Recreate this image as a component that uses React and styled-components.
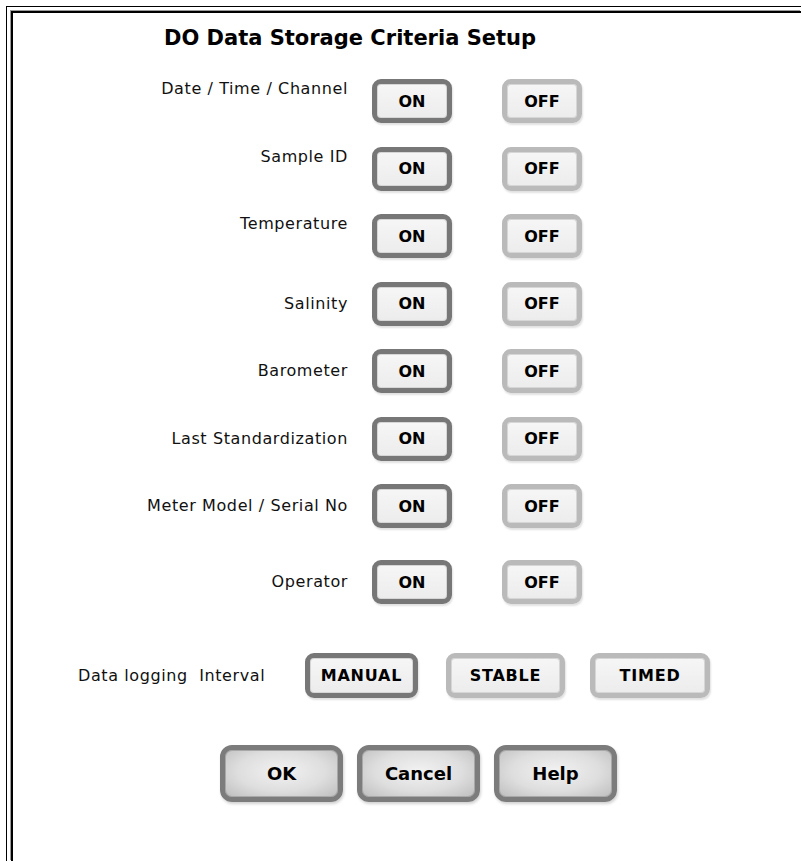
import React from 'react';
import styled, { createGlobalStyle } from 'styled-components';

const GlobalStyle = createGlobalStyle`
  html, body {
    margin: 0;
    padding: 0;
    background: #fff;
    overflow: hidden;
  }
  body {
    font-family: 'DejaVu Sans', Verdana, sans-serif;
    color: #111;
  }
`;

const Frame = styled.div`
  margin: 6px 0 0 6px;
  padding: 4px 0 0 4px;
  height: calc(100vh - 6px);
  box-sizing: border-box;
  border-left: 1px solid #000;
  border-top: 1px solid #000;
`;

const Panel = styled.div`
  height: 100%;
  box-sizing: border-box;
  border-left: 2px solid #000;
  border-top: 2px solid #000;
  box-shadow: -1px -1px 0 #9a9a9a;
`;

const Content = styled.div`
  width: 674px;
  padding-top: 12px;
  display: flex;
  flex-direction: column;
`;

const Title = styled.h1`
  margin: 0;
  font-size: 21px;
  line-height: 26px;
  font-weight: bold;
  text-align: center;
  color: #000;
`;

const Rows = styled.div`
  margin-top: 28px;
  display: flex;
  flex-direction: column;
`;

const Row = styled.div`
  display: flex;
  align-items: center;
  height: 44px;
  margin-top: ${p => p.$first ? 0 : 23.5 + (p.$extra || 0)}px;
`;

const Label = styled.div`
  width: 335px;
  flex-shrink: 0;
  text-align: right;
  font-size: 16px;
  letter-spacing: 0.6px;
  line-height: 20px;
  white-space: nowrap;
  margin-bottom: ${p => p.$raise || 0}px;
`;

const Toggle = styled.button`
  flex-shrink: 0;
  width: ${p => p.$w || 80}px;
  height: ${p => p.$h || 44}px;
  margin-left: ${p => p.$gap}px;
  box-sizing: border-box;
  border: 5px solid ${p => p.$on ? '#777' : '#bababa'};
  border-radius: 9px;
  background: linear-gradient(#f6f6f6, #ececec);
  box-shadow: inset 0 0 0 1px #d6d6d6, 1px 2px 2px rgba(0, 0, 0, 0.12);
  font-family: 'DejaVu Sans', Verdana, sans-serif;
  font-weight: bold;
  font-size: ${p => p.$fs || 16}px;
  letter-spacing: ${p => p.$ls || 0}px;
  color: #000;
  padding: 0;
  cursor: pointer;
`;

const LogRow = styled.div`
  margin-top: 49px;
  padding-left: 65px;
  display: flex;
  align-items: center;
  height: 45px;
`;

const LogLabel = styled.div`
  width: 227px;
  flex-shrink: 0;
  font-size: 16px;
  letter-spacing: 0.6px;
  white-space: pre;
`;

const Actions = styled.div`
  margin-top: 47px;
  padding-left: 207px;
  display: flex;
  gap: 14px;
`;

const ActionButton = styled.button`
  flex-shrink: 0;
  width: 123px;
  height: 57px;
  box-sizing: border-box;
  border: 5px solid #7c7c7c;
  border-radius: 12px;
  background: radial-gradient(ellipse at 50% 45%, #f2f2f2 0%, #dedede 55%, #bdbdbd 100%);
  box-shadow: inset 0 0 0 1px #a8a8a8, 1px 2px 3px rgba(0, 0, 0, 0.18);
  font-family: 'DejaVu Sans', Verdana, sans-serif;
  font-weight: bold;
  font-size: 18px;
  color: #000;
  padding: 0;
  cursor: pointer;
`;

const fields = [
  { label: 'Date / Time / Channel', raise: 24 },
  { label: 'Sample ID', raise: 24 },
  { label: 'Temperature', raise: 24 },
  { label: 'Salinity', raise: 0 },
  { label: 'Barometer', raise: 0 },
  { label: 'Last Standardization', raise: 0 },
  { label: 'Meter Model / Serial No', raise: 0 },
  { label: 'Operator', raise: 0, extra: 8.5 },
];

export default function App() {
  return (
    <>
      <GlobalStyle />
      <Frame>
        <Panel>
          <Content>
            <Title>DO Data Storage Criteria Setup</Title>
            <Rows>
              {fields.map((f, i) => (
                <Row key={f.label} $first={i === 0} $extra={f.extra}>
                  <Label $raise={f.raise}>{f.label}</Label>
                  <Toggle $on $gap={24}>ON</Toggle>
                  <Toggle $gap={50}>OFF</Toggle>
                </Row>
              ))}
            </Rows>
            <LogRow>
              <LogLabel>{'Data logging  Interval'}</LogLabel>
              <Toggle $on $gap={0} $w={113} $h={45} $ls={0.8}>MANUAL</Toggle>
              <Toggle $gap={28} $w={119} $h={45} $ls={0.8}>STABLE</Toggle>
              <Toggle $gap={25} $w={120} $h={45} $ls={0.8}>TIMED</Toggle>
            </LogRow>
            <Actions>
              <ActionButton>OK</ActionButton>
              <ActionButton>Cancel</ActionButton>
              <ActionButton>Help</ActionButton>
            </Actions>
          </Content>
        </Panel>
      </Frame>
    </>
  );
}
